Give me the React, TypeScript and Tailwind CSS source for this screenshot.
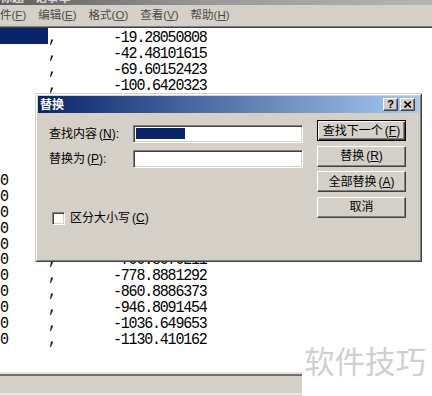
import React from "react";

const ui = "font-['Liberation_Sans','Noto_Sans_CJK_SC',sans-serif]";
const mono = "font-['Liberation_Mono',monospace]";

function K({ c }: { c: string }) {
  return (
    <span className="ml-[2px]">
      (<span className="underline underline-offset-[1px]">{c}</span>)
    </span>
  );
}

type Row = { a: "" | "sel" | "0"; n: string };
/* rows 4–13 sit entirely under the dialog, so only their visible left part is given */
const rows: Row[] = [
  { a: "sel", n: "-19.28050808" },
  { a: "", n: "-42.48101615" },
  { a: "", n: "-69.60152423" },
  { a: "", n: "-100.6420323" },
  { a: "", n: "" },
  { a: "", n: "" },
  { a: "", n: "" },
  { a: "", n: "" },
  { a: "", n: "" },
  { a: "0", n: "" },
  { a: "0", n: "" },
  { a: "0", n: "" },
  { a: "0", n: "" },
  { a: "0", n: "" },
  { a: "0", n: "-700.8070211" },
  { a: "0", n: "-778.8881292" },
  { a: "0", n: "-860.8886373" },
  { a: "0", n: "-946.8091454" },
  { a: "0", n: "-1036.649653" },
  { a: "0", n: "-1130.410162" },
];

const btn =
  "h-[21px] w-[89px] bg-[#d4d0c8] border border-t-white border-l-white border-r-[#404040] border-b-[#404040] shadow-[inset_-1px_-1px_0_#808080] flex items-center justify-center text-[12px] text-black whitespace-nowrap";
const btnDefault =
  "h-[21px] w-[89px] bg-[#d4d0c8] border border-black shadow-[inset_1px_1px_0_#fff,inset_-1px_-1px_0_#404040,inset_-2px_-2px_0_#808080] flex items-center justify-center text-[12px] text-black whitespace-nowrap";
const sunken =
  "bg-white border border-t-[#808080] border-l-[#808080] border-r-white border-b-white shadow-[inset_1px_1px_0_#404040,inset_-1px_-1px_0_#d4d0c8]";
const capBtn =
  "w-[15px] h-[13px] bg-[#d4d0c8] border border-t-white border-l-white border-r-[#404040] border-b-[#404040] shadow-[inset_-1px_-1px_0_#808080] flex items-center justify-center";

const glyph = "inline-block leading-[10px] scale-y-[1.15] translate-y-[3px]";

export default function App() {
  return (
    <div className={`relative w-[432px] h-[396px] overflow-hidden bg-white ${ui}`}>
      {/* title strip */}
      <div className="h-[5px] overflow-hidden bg-[linear-gradient(to_right,#5e5e5e,#9a9a9a_50%,#b4b4b4)]">
        <div className="-mt-[9px] text-[12px] font-bold text-[#d6d6d6] leading-[14px] whitespace-nowrap">
          标题 - 记事本
        </div>
      </div>
      {/* menu bar */}
      <div className="h-[21px] bg-[#d4d0c8] flex items-center gap-[12px] text-[11.5px] text-[#4a4a4a] whitespace-nowrap">
        <span>件(<span className="underline underline-offset-[1px]">F</span>)</span>
        <span>编辑(<span className="underline underline-offset-[1px]">E</span>)</span>
        <span>格式(<span className="underline underline-offset-[1px]">O</span>)</span>
        <span>查看(<span className="underline underline-offset-[1px]">V</span>)</span>
        <span>帮助(<span className="underline underline-offset-[1px]">H</span>)</span>
      </div>
      <div className="h-[1px] bg-[#808080]" />
      <div className="h-[1px] bg-[#404040]" />
      {/* text area */}
      <div className={`h-[344px] ${mono} text-[15px] tracking-[-1.2px] text-black`}>
        {rows.map((r, i) => (
          <div key={i} className="grid grid-cols-[48px_65px_auto] h-[15.9px] leading-[15.9px] whitespace-nowrap">
            <div className={r.a === "sel" ? "bg-[#0a246a]" : ""}>
              {r.a === "0" ? <span className={glyph}>0</span> : ""}
            </div>
            <div>{r.n ? <span className={glyph}>,</span> : null}</div>
            <div>{r.n ? <span className={glyph}>{r.n}</span> : null}</div>
          </div>
        ))}
      </div>
      {/* bottom bar */}
      <div className="w-[302px] h-[24px] flex flex-col">
        <div className="h-[2px] bg-[#e4e1da]" />
        <div className="h-[2px] bg-[#707070]" />
        <div className="flex-1 bg-[#d4d0c8]" />
        <div className="h-[2px] bg-[#ebe9e3]" />
        <div className="h-[1px] bg-[#d4d0c8]" />
      </div>

      {/* watermark */}
      <div className="absolute z-10 left-[304px] top-[345px] text-[30.5px] leading-none text-[#d0d0d0] font-['Noto_Sans_CJK_SC',sans-serif] whitespace-nowrap">
        软件技巧
      </div>

      {/* dialog */}
      <div className="absolute z-20 left-[35px] top-[93px] w-[387px] h-[169px] bg-[#d4d0c8] border border-t-[#d4d0c8] border-l-[#d4d0c8] border-r-[#404040] border-b-[#404040] shadow-[inset_1px_1px_0_#fff,inset_-1px_-1px_0_#808080] p-[2px] flex flex-col">
        <div className="h-[17px] bg-[linear-gradient(to_right,#0a246a,#a6caf0)] flex items-center pl-[2px] pr-[4px]">
          <span className="text-white font-bold text-[12px] leading-none">替换</span>
          <div className="ml-auto flex gap-[2px]">
            <div className={capBtn}>
              <span className="text-[11px] font-bold leading-none text-black font-['Liberation_Sans',sans-serif]">?</span>
            </div>
            <div className={capBtn}>
              <svg width="8" height="7" viewBox="0 0 8 7">
                <path d="M0.5 0.5 L7 6.5 M7 0.5 L0.5 6.5" stroke="black" strokeWidth="1.6" />
              </svg>
            </div>
          </div>
        </div>
        <div className="flex flex-1">
          <div className="pl-[11px] pt-[12px] flex flex-col">
            <div className="flex items-center h-[18px]">
              <span className="w-[84px] text-[12px] text-black whitespace-nowrap">
                查找内容<K c="N" />:
              </span>
              <div className={`w-[170px] h-[18px] ${sunken} pl-[2px] pt-[2px]`}>
                <div className="w-[49px] h-[11px] bg-[#0a246a]" />
              </div>
            </div>
            <div className="flex items-center h-[18px] mt-[7px]">
              <span className="w-[84px] text-[12px] text-black whitespace-nowrap">
                替换为<K c="P" />:
              </span>
              <div className={`w-[170px] h-[18px] ${sunken}`} />
            </div>
            <div className="flex items-center mt-[41px] ml-[3px] gap-[5px]">
              <div className={`w-[13px] h-[13px] ${sunken}`} />
              <span className="text-[12px] text-black whitespace-nowrap">
                区分大小写<K c="C" />
              </span>
            </div>
          </div>
          <div className="ml-[14px] pt-[7px] flex flex-col gap-[4.5px]">
            <div className={btnDefault}>
              查找下一个<K c="F" />
            </div>
            <div className={btn}>
              替换<K c="R" />
            </div>
            <div className={btn}>
              全部替换<K c="A" />
            </div>
            <div className={btn}>取消</div>
          </div>
        </div>
      </div>
    </div>
  );
}
